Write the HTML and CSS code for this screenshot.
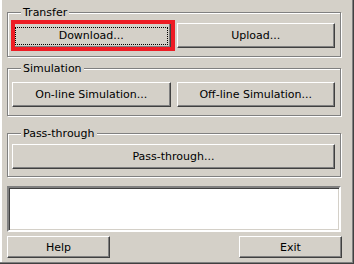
FILE: index.html
```html
<!DOCTYPE html>
<html lang="en">
<head>
    <meta charset="UTF-8">
    <meta name="viewport" content="width=device-width, initial-scale=1.0">
    <title>Transfer</title>
    <link rel="stylesheet" href="styles.css">
</head>
<body>
    <div class="window">
        <div class="group group-transfer">
            <div class="group-title">Transfer</div>
            <div class="button-row">
                <button type="button" class="btn btn-default"><span class="focus">Download...</span></button>
                <button type="button" class="btn">Upload...</button>
            </div>
        </div>

        <div class="group group-simulation">
            <div class="group-title">Simulation</div>
            <div class="button-row">
                <button type="button" class="btn">On-line Simulation...</button>
                <button type="button" class="btn">Off-line Simulation...</button>
            </div>
        </div>

        <div class="group group-pass">
            <div class="group-title">Pass-through</div>
            <div class="button-row single">
                <button type="button" class="btn">Pass-through...</button>
            </div>
        </div>

        <div class="log"></div>

        <div class="footer">
            <button type="button" class="btn btn-small">Help</button>
            <button type="button" class="btn btn-small">Exit</button>
        </div>
    </div>
</body>
</html>
```

FILE: styles.css
```css
* {
    box-sizing: border-box;
}

body {
    margin: 0;
    background-color: #d4d0c8;
    font-family: 'DejaVu Sans', sans-serif;
    font-size: 11px;
    color: #000;
}

.window {
    width: 354px;
    height: 264px;
    padding: 12px 13px 0 7px;
    background-color: #d4d0c8;
    box-shadow: inset -1px -1px 0 #404040, inset -2px -2px 0 #808080, inset 2px 0 0 #fff, inset 1px 0 0 #d4d0c8;
}

.group {
    border: 1px solid #808080;
    box-shadow: inset 1px 1px 0 #fff, 1px 1px 0 #fff;
    padding: 0 5px 8px 4px;
}

.group-title {
    width: max-content;
    height: 13px;
    line-height: 13px;
    margin: -7px 0 0 9px;
    padding: 0 2px;
    background-color: #d4d0c8;
}

.button-row {
    display: grid;
    grid-template-columns: 1fr 1fr;
    gap: 6px;
    margin-top: 4px;
}

.button-row.single {
    grid-template-columns: 1fr;
}

.group-simulation {
    margin-top: 11px;
}

.group-simulation .button-row {
    margin-top: 7px;
}

.group-pass {
    margin-top: 17px;
}

.group-pass .button-row {
    height: 24px;
}

.btn {
    height: 25px;
    padding: 0;
    font: inherit;
    color: #000;
    background-color: #d4d0c8;
    border: 1px solid;
    border-color: #fff #404040 #404040 #fff;
    box-shadow: inset -1px -1px 0 #808080;
    border-radius: 0;
}

.btn-default {
    position: relative;
}

.btn-default::after {
    content: "";
    position: absolute;
    left: -2px;
    top: -4px;
    right: -5px;
    bottom: -4px;
    border: 4px solid #ed1c24;
}

.focus {
    display: flex;
    align-items: center;
    justify-content: center;
    margin: 2px;
    height: calc(100% - 5px);
    border: 1px dotted #000;
}

.log {
    height: 46px;
    margin-top: 9px;
    background-color: #fff;
    border: 2px solid;
    border-color: #808080 #fff #fff #808080;
    box-shadow: inset 1px 1px 0 #404040, inset -1px -1px 0 #d4d0c8;
}

.footer {
    display: flex;
    justify-content: space-between;
    margin-top: 4px;
    margin-right: -1px;
}

.btn-small {
    width: 103px;
    height: 22px;
}
```
